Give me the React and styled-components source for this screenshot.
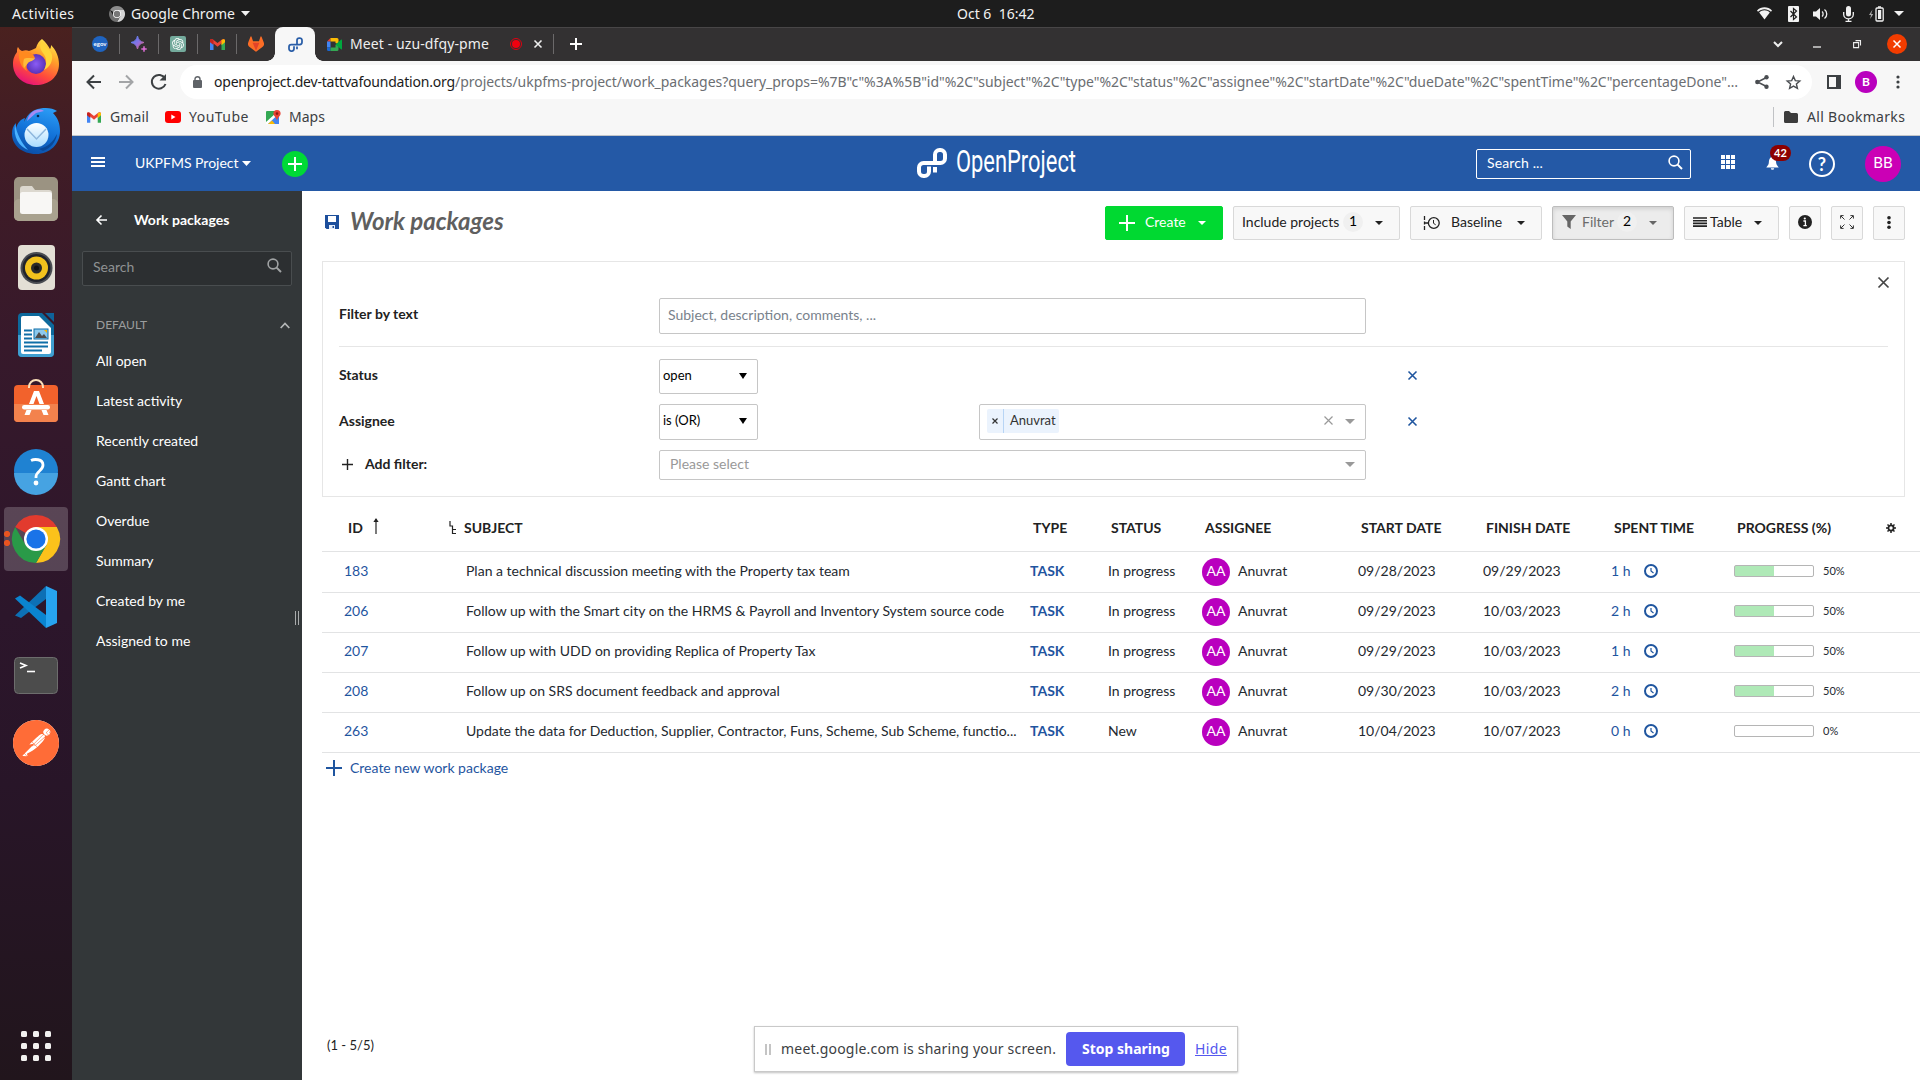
import React from "react";
import styled, { createGlobalStyle, css } from "styled-components";
import { SiPostman, SiOpenai, SiGitlab } from "react-icons/si";

const UI = `"Noto Sans", "Open Sans", sans-serif`;
const LATO = `Lato, "Open Sans", sans-serif`;

const Global = createGlobalStyle`
  * { box-sizing: border-box; }
  body { margin: 0; overflow: hidden; background: #fff; font-family: ${LATO}; font-size: 14px; }
`;

const Label = styled.span`
  display: inline-block;
  flex: none;
  white-space: pre;
  font-family: ${(p) => (p.$ui ? UI : LATO)};
  font-size: ${(p) => p.$size || 14}px;
  font-weight: ${(p) => p.$weight || 400};
  font-style: ${(p) => p.$style || "normal"};
  color: ${(p) => p.$color || "inherit"};
  width: ${(p) => (p.$w ? p.$w + "px" : "auto")};
  letter-spacing: ${(p) => p.$ls || 0}px;
  margin-left: ${(p) => p.$ml || 0}px;
  margin-bottom: ${(p) => (p.$ui ? p.$up || 0 : 2)}px;
  text-decoration: ${(p) => p.$deco || "none"};
`;
const T = ({ w, ls, ...r }) => <Label $w={w} $ls={ls} {...r} />;

const Glyph = styled.svg`
  display: block;
  flex: none;
  margin-left: ${(p) => p.$ml || 0}px;
  margin-top: ${(p) => p.$mt || 0}px;
  overflow: visible;
`;
const Icon = ({ w = 16, h, vb, ml, mt, children, ...r }) => (
  <Glyph width={w} height={h || w} viewBox={vb || `0 0 ${w} ${h || w}`} $ml={ml} $mt={mt} fill="none" {...r}>
    {children}
  </Glyph>
);
const Caret = ({ w = 8, h = 4, color = "#222", ml, mt }) => (
  <Icon w={w} h={h} ml={ml} mt={mt}>
    <path d={`M0 0H${w}L${w / 2} ${h}Z`} fill={color} />
  </Icon>
);
const Cross = ({ s = 9, color, ml, mt, sw = 1.6 }) => (
  <Icon w={s} ml={ml} mt={mt}>
    <path d={`M.5 .5L${s - 0.5} ${s - 0.5}M${s - 0.5} .5L.5 ${s - 0.5}`} stroke={color} strokeWidth={sw} />
  </Icon>
);
const Plus = ({ s = 16, color, ml, mt, sw = 2 }) => (
  <Icon w={s} ml={ml} mt={mt}>
    <path d={`M${s / 2} 0V${s}M0 ${s / 2}H${s}`} stroke={color} strokeWidth={sw} />
  </Icon>
);
const Magnifier = ({ color, ml, mt }) => (
  <Icon w={15} ml={ml} mt={mt}>
    <circle cx="6" cy="6" r="4.9" stroke={color} strokeWidth="1.6" />
    <path d="M9.6 9.6L14 14" stroke={color} strokeWidth="2" />
  </Icon>
);
const OpMark = ({ w, color, ml, mt, sw = 4 }) => (
  <Icon w={w} vb="0 0 30 30" ml={ml} mt={mt}>
    <path
      d="M18 15V6.5a4.5 4.5 0 0 1 4.5-4.5h1a4.5 4.5 0 0 1 4.5 4.5v4a4.5 4.5 0 0 1-4.500 4.500H6.500a4.500 4.500 0 0 0-4.500 4.500v4a4.500 4.500 0 0 0 4.500 4.500h1a4.500 4.500 0 0 0 4.500-4.500v-5"
      stroke={color}
      strokeWidth={sw}
    />
    <path d="M18 19v5.500" stroke={color} strokeWidth={sw} />
  </Icon>
);

/* ---------- desktop shell ---------- */
const Screen = styled.div`
  width: 1920px;
  height: 1080px;
  display: flex;
  flex-direction: column;
  overflow: hidden;
`;
const TopBar = styled.div`
  height: 27px;
  display: flex;
  align-items: center;
  background: #1d1d1d;
  color: #f2f2f2;
`;
const Desktop = styled.div`
  flex: 1;
  display: flex;
  min-height: 0;
`;
const Dock = styled.nav`
  width: 72px;
  padding: 4px 4px 18px;
  display: flex;
  flex-direction: column;
  gap: 4px;
  background: linear-gradient(#4a211f 0, #401c26 12%, #37192b 30%, #2c162b 56%, #281528 72%, #21151c 100%);
`;
const DockSlot = styled.div`
  height: 64px;
  position: relative;
  display: flex;
  align-items: center;
  justify-content: center;
  border-radius: 4px;
  background: ${(p) => (p.$active ? "rgba(255,255,255,.2)" : "none")};
`;
const Running = styled.i`
  position: absolute;
  left: 0;
  top: 24px;
  width: 6px;
  height: 16px;
  background: radial-gradient(circle at 3px 3px, #e95420 2.800px, transparent 3.200px),
    radial-gradient(circle at 3px 12px, #e95420 2.800px, transparent 3.200px);
`;
const AppsSlot = styled(DockSlot)`
  margin-top: auto;
  height: 32px;
`;
const Round = styled.div`
  width: ${(p) => p.$s}px;
  height: ${(p) => p.$s}px;
  flex: none;
  border-radius: 50%;
  display: flex;
  align-items: center;
  justify-content: center;
  margin-left: ${(p) => p.$ml || 0}px;
  margin-top: ${(p) => p.$mt || 0}px;
  padding-bottom: ${(p) => p.$pb || 0}px;
  background: ${(p) => p.$bg};
  color: ${(p) => p.$fg || "#fff"};
  border: ${(p) => p.$bd || "none"};
  font-size: ${(p) => p.$fs || 14}px;
  font-weight: ${(p) => p.$fw || 400};
  line-height: 1;
`;

/* ---------- browser chrome ---------- */
const Browser = styled.div`
  flex: 1;
  min-width: 0;
  display: flex;
  flex-direction: column;
`;
const TabStrip = styled.div`
  height: 34px;
  display: flex;
  align-items: center;
  background: #333132;
  box-shadow: inset 0 1px #484647;
`;
const PinnedTab = styled.div`
  width: ${(p) => (p.$last ? 38 : 39)}px;
  height: 20px;
  display: flex;
  align-items: center;
  justify-content: center;
  border-right: 1px solid ${(p) => (p.$last ? "transparent" : "#6b696a")};
`;
const ActiveTab = styled.div`
  width: 40px;
  height: 34px;
  display: flex;
  align-items: center;
  justify-content: center;
  background: #f7f7f7;
  border-radius: 8px 8px 0 0;
  position: relative;
  &::before,
  &::after {
    content: "";
    position: absolute;
    bottom: 0;
    width: 8px;
    height: 8px;
  }
  &::before {
    left: -8px;
    background: radial-gradient(circle at 0 0, transparent 7.500px, #f7f7f7 8px);
  }
  &::after {
    right: -8px;
    background: radial-gradient(circle at 100% 0, transparent 7.500px, #f7f7f7 8px);
  }
`;
const Rule = styled.i`
  width: 1px;
  height: 20px;
  flex: none;
  background: ${(p) => p.$c};
  margin-left: ${(p) => p.$ml}px;
`;
const Toolbar = styled.div`
  height: 42px;
  display: flex;
  align-items: center;
  background: #f7f7f7;
`;
const Omnibox = styled.div`
  margin-left: 13px;
  width: 1632px;
  height: 34px;
  border-radius: 17px;
  background: #fff;
  display: flex;
  align-items: center;
`;
const Bookmarks = styled.div`
  height: 33px;
  padding-bottom: 4px;
  display: flex;
  align-items: center;
  background: #f7f7f7;
  border-bottom: 1px solid #c2c5c9;
  color: #3c4043;
`;
const Spacer = styled.i`
  flex: 1;
`;

/* ---------- application ---------- */
const AppHeader = styled.header`
  height: 55px;
  display: flex;
  align-items: center;
  background: #2459a6;
  color: #fff;
`;
const HeaderSearch = styled.div`
  width: 215px;
  height: 30px;
  margin-left: 399px;
  border: 1px solid #fff;
  border-radius: 2px;
  display: flex;
  align-items: center;
`;
const Bell = styled.div`
  width: 25px;
  height: 24px;
  margin-left: 31px;
  position: relative;
`;
const BellCount = styled.span`
  position: absolute;
  left: 4px;
  top: -7px;
  width: 21px;
  height: 16px;
  border-radius: 8px;
  background: #8d0000;
  color: #fff;
  font: 700 11px/16px ${LATO};
  text-align: center;
`;
const Body = styled.div`
  flex: 1;
  display: flex;
  min-height: 0;
`;
const Side = styled.aside`
  width: 230px;
  background: #333739;
  color: #fff;
  display: flex;
  flex-direction: column;
  position: relative;
`;
const SideTitle = styled.div`
  height: 60px;
  padding: 0 0 2px 24px;
  display: flex;
  align-items: center;
`;
const SideSearch = styled.div`
  margin: 0 10px;
  height: 35px;
  border: 1px solid #494d4f;
  border-radius: 2px;
  background: #2c2f31;
  display: flex;
  align-items: center;
  padding: 0 9px 3px 10px;
  justify-content: space-between;
  color: #8f9293;
`;
const SideGroup = styled.div`
  height: 40px;
  margin-top: 19px;
  padding: 0 12px 0 24px;
  display: flex;
  align-items: center;
  justify-content: space-between;
  color: #9b9d9e;
`;
const SideItem = styled.div`
  height: 40px;
  padding: 0 0 8px 24px;
  display: flex;
  align-items: center;
`;
const SideList = styled.div`
  padding-top: 0;
`;
const Resizer = styled.i`
  position: absolute;
  right: 3px;
  top: 420px;
  width: 4px;
  height: 14px;
  border: solid #a9abac;
  border-width: 0 1px;
`;
const Main = styled.main`
  flex: 1;
  min-width: 0;
  padding-left: 20px;
  display: flex;
  flex-direction: column;
  color: #222;
`;
const TitleRow = styled.div`
  height: 70px;
  padding: 15px 15px 0 3px;
  display: flex;
  align-items: flex-start;
`;
const TitleBox = styled.div`
  flex: 1;
  height: 31px;
  display: flex;
  align-items: center;
`;
const Button = styled.div`
  width: ${(p) => p.$w}px;
  height: 34px;
  margin-left: 10px;
  border-radius: 2px;
  display: flex;
  align-items: center;
  padding-bottom: 1px;
  justify-content: ${(p) => (p.$center ? "center" : "flex-start")};
  border: 1px solid #d9d9d9;
  background: #f8f8f8;
  ${(p) => p.$primary && css`background: #00d931; border-color: #00d931; color: #fff;`}
  ${(p) => p.$pressed && css`background: #ececec; border-color: #bdbdbd; color: #6b6b6b; box-shadow: inset 0 2px 4px rgba(0,0,0,.12);`}
`;
const Panel = styled.section`
  width: 1583px;
  height: 236px;
  border: 1px solid #e6e6e6;
  padding: 0 16px;
`;
const PanelHead = styled.div`
  height: 36px;
  padding-right: 0;
  margin-right: -1px;
  display: flex;
  justify-content: flex-end;
`;
const FilterRow = styled.div`
  display: grid;
  grid-template-columns: 320px 320px 387px 60px;
  align-items: center;
  height: ${(p) => p.$h}px;
  margin-top: ${(p) => p.$mt || 0}px;
`;
const FilterLabel = styled.div`
  display: flex;
  align-items: center;
  padding-bottom: ${(p) => p.$up || 0}px;
`;
const Field = styled.div`
  height: 100%;
  border: 1px solid #c6c6c6;
  border-radius: 2px;
  display: flex;
  align-items: center;
  padding: 0 10px 2px ${(p) => p.$pl || 8}px;
  width: ${(p) => (p.$w ? p.$w + "px" : "auto")};
  grid-column: ${(p) => p.$col || "auto"};
`;
const Chip = styled.span`
  height: 24px;
  width: 72px;
  border-radius: 2px;
  background: #ebf3fd;
  display: flex;
  align-items: stretch;
  color: #333;
`;
const ChipCross = styled.span`
  width: 17px;
  border-right: 1px solid #b8d5f5;
  display: flex;
  align-items: center;
  justify-content: center;
`;
const ChipText = styled.span`
  padding-left: 6px;
  display: flex;
  align-items: center;
`;
const PanelRule = styled.div`
  height: 1px;
  margin-top: 12px;
  background: #e6e6e6;
`;
const Row = styled.div`
  display: grid;
  grid-template-columns: 122px 576px 78px 94px 156px 125px 128px 123px 146px 1fr;
  height: ${(p) => p.$h || 40}px;
  border-bottom: 1px solid #e2e3e4;
`;
const Th = styled.div`
  display: flex;
  align-items: center;
  padding: 8px 0 0 ${(p) => p.$pl || 13}px;
`;
const Td = styled.div`
  display: flex;
  align-items: center;
  padding: 0 0 ${(p) => (p.$first ? 2 : 3)}px ${(p) => p.$pl || 10}px;
  min-width: 0;
  color: ${(p) => (p.$link ? "#1f559f" : "#24292f")};
`;
const Bar = styled.div`
  width: 80px;
  height: 12px;
  border: 1px solid #b5b5b5;
  border-radius: 2px;
  background: linear-gradient(#afe9b7, #afe9b7) no-repeat;
  background-size: ${(p) => p.$v}% 100%;
`;
const AddRow = styled.div`
  height: 30px;
  padding-left: 4px;
  display: flex;
  align-items: center;
  color: #1f559f;
`;
const Pager = styled.div`
  margin-top: auto;
  height: 68px;
  padding-left: 5px;
  display: flex;
  align-items: center;
`;
const ShareBar = styled.div`
  position: absolute;
  left: 754px;
  top: 1026px;
  width: 484px;
  height: 46px;
  border: 1px solid #c9c9c9;
  box-shadow: 0 1px 2px rgba(0, 0, 0, 0.25);
  background: #fff;
  display: flex;
  align-items: center;
  color: #3c4043;
`;
const Grip = styled.i`
  width: 6px;
  height: 11px;
  margin-left: 10px;
  border: solid #c4c4c4;
  border-width: 0 2px;
`;
const StopButton = styled.div`
  width: 119px;
  height: 34px;
  margin-left: 11px;
  border-radius: 4px;
  background: #5558ee;
  color: #fff;
  display: flex;
  align-items: center;
  justify-content: center;
`;

/* ---------- dock icons ---------- */
const Firefox = () => (
  <Icon w={46} h={46} vb="0 0 46 46" mt={-2}>
    <defs>
      <linearGradient id="ff" x1=".8" y1="0" x2=".3" y2="1">
        <stop offset="0" stopColor="#fff04f" /><stop offset=".35" stopColor="#ffa02a" /><stop offset=".7" stopColor="#ff4a3c" /><stop offset="1" stopColor="#e5107c" />
      </linearGradient>
      <radialGradient id="ffg"><stop offset="0" stopColor="#8a5cf5" /><stop offset="1" stopColor="#5a32b8" /></radialGradient>
    </defs>
    <path d="M29 0c4 3 6 7 8 10 1-1 1-3 1-4 5 5 8 12 8 19 0 13-10 21-23 21S0 37 0 25c0-6 2-9 4-12 0-2 0-4 1-5 1 2 2 3 4 4 3-1 5-1 7 0 3-1 5-2 7-3 1-4 3-7 6-9z" fill="url(#ff)" />
    <circle cx="23" cy="25" r="10" fill="url(#ffg)" />
    <path d="M6 13c3-1 6-1 9 0 3 0 6 3 7 6-3 1-5 2-7 4-2 3-2 7-1 9-6-3-9-12-8-19z" fill="#ff8a1f" />
    <path d="M11 20c3-2 7 0 11-1-1 3-5 3-7 5l-4 5c-1-3-1-6 0-9z" fill="#ffbc3a" />
    <path d="M29 2c-3 4-2 8 1 12 4 5 4 12 1 17 6-3 9-9 8-15-1-5-7-8-10-14z" fill="#ffd53a" />
  </Icon>
);
const Thunderbird = () => (
  <Icon w={48} h={46} vb="0 0 48 46">
    <defs>
      <linearGradient id="tb" x1=".7" y1="0" x2=".4" y2="1"><stop offset="0" stopColor="#2a9bf5" /><stop offset=".5" stopColor="#1373d9" /><stop offset="1" stopColor="#0b4fa8" /></linearGradient>
      <linearGradient id="tbe" x1="0" y1="0" x2="0" y2="1"><stop offset="0" stopColor="#fff" /><stop offset="1" stopColor="#a9dcff" /></linearGradient>
    </defs>
    <path d="M23 2C31-1 40-.5 45 3l-4 2c5 5 7 11 7 18 0 13-10 23-24 23S0 37 0 26c0-5 1-8 4-11l0 5c2-6 5-9 9-10l-1 4c3-6 6-10 11-12z" fill="url(#tb)" />
    <path d="M3 16c-2 14 4 22 13 26C9 34 5 26 3 16z" fill="#4bb2ff" />
    <path d="M24 2c-5 2-8 6-9 11l9-8 8-2c-3-2-5-1.500-8-1z" fill="#a58bf5" />
    <circle cx="24.500" cy="27" r="12" fill="url(#tbe)" />
    <path d="M15 21l9.500 10 9.500-10" stroke="#8db6dd" strokeWidth="1.500" />
    <circle cx="26" cy="8" r="1.300" fill="#06264f" />
    <path d="M31 43c8-3 13-9 14-17-4 8-9 13-18 15z" fill="#0a4796" />
  </Icon>
);
const Files = () => (
  <Icon w={44} h={44}>
    <rect width="44" height="44" rx="5" fill="#9b9382" />
    <rect y="22" width="44" height="22" rx="5" fill="#a9a28f" />
    <path d="M6 12a3 3 0 0 1 3-3h9l3 4h14a3 3 0 0 1 3 3v4H6z" fill="#dcd8cf" />
    <rect x="6" y="15" width="32" height="22" rx="2.500" fill="#f8f7f5" />
  </Icon>
);
const Rhythmbox = () => (
  <Icon w={37} h={45}>
    <rect width="37" height="45" rx="4" fill="#e3dfd5" />
    <circle cx="18.500" cy="23" r="16" fill="#4a4d52" />
    <circle cx="18.500" cy="23" r="14" fill="#20232c" />
    <circle cx="18.500" cy="23" r="11.500" fill="#f2c21d" />
    <circle cx="18.500" cy="23" r="5.500" fill="#2a2a2a" />
    <circle cx="18.500" cy="23" r="2.500" fill="#111" />
  </Icon>
);
const Writer = () => (
  <Icon w={36} h={44}>
    <path d="M4 0H24L36 12V40a4 4 0 0 1-4 4H4a4 4 0 0 1-4-4V4a4 4 0 0 1 4-4z" fill="#0d699c" />
    <path d="M0 22H36V40a4 4 0 0 1-4 4H4a4 4 0 0 1-4-4z" fill="#3f9fd0" />
    <path d="M27 0h9v9z" fill="#0e629a" />
    <path d="M5 3H21L33 15V39a2 2 0 0 1-2 2H5a2 2 0 0 1-2-2V5a2 2 0 0 1 2-2z" fill="#fff" />
    <path d="M6 17.500h8M6 21.500h8M6 25.500h8M6 29.500h24M6 33.500h24M6 37.500h18" stroke="#0f6fa8" strokeWidth="2" />
    <rect x="16" y="16" width="14" height="10" fill="#8cc9ee" stroke="#0f6fa8" />
    <path d="M17 25l4-6 3 4 2-2 3 4z" fill="#4d4d4d" /><path d="M26 17h3v3z" fill="#f5b400" />
  </Icon>
);
const Software = () => (
  <Icon w={44} h={43} mt={-6}>
    <rect y="6" width="44" height="37" rx="4" fill="#f2622c" />
    <path d="M0 25H44V39a4 4 0 0 1-4 4H4a4 4 0 0 1-4-4z" fill="#f3824d" />
    <path d="M15 9v-1a7 7 0 0 1 14 0v1" stroke="#fbe0b9" strokeWidth="2" />
    <path d="M20 12h5l5 13h-4.500l-3-8-3 8H15zM12.500 31h5l-2 5H10.500zM27.500 31h5l2 5h-5z" fill="#fff" />
    <rect x="8" y="26" width="28" height="4.500" rx="2.200" fill="#fff" />
  </Icon>
);
const HelpApp = () => (
  <Icon w={44}>
    <circle cx="22" cy="22" r="22" fill="#1f82d2" />
    <path d="M0 24a22 22 0 0 0 44 0z" fill="#46a3e2" />
    <path d="M17 11.500c3-1.500 12-2 12 4.500 0 6-7 6-7 12v1" stroke="#fff" strokeWidth="2.800" />
    <circle cx="22" cy="34" r="2.400" fill="#fff" />
  </Icon>
);
const ChromeIcon = ({ w = 48, ml, gray }) => (
  <Icon w={w} vb="0 0 48 48" ml={ml}>
    <path d="M24 24L3.200 12A24 24 0 0 1 44.800 12H24z" fill={gray ? "#8d8d8d" : "#e23b2e"} />
    <path d="M24 12H44.800A24 24 0 0 1 24 48l10.400-18z" fill={gray ? "#d5d5d5" : "#fcc21b"} />
    <path d="M3.200 12A24 24 0 0 0 24 48L34.400 30H13.600z" fill={gray ? "#6f6f6f" : "#2a9a48"} />
    <circle cx="24" cy="24" r="12" fill="#fff" />
    <circle cx="24" cy="24" r="9.600" fill={gray ? "#777" : "#1a73e8"} />
  </Icon>
);
const VsCode = () => (
  <Icon w={42}>
    <path d="M0 29.500L31 0V13L6 32z" fill="#0d70b5" />
    <path d="M0 12.500L5 9.500 31 29V42z" fill="#0a84d0" />
    <path d="M31 0L42 5V37L31 42z" fill="#27a4f0" />
  </Icon>
);
const Terminal = () => (
  <Icon w={44} h={37}>
    <rect x=".5" y=".5" width="43" height="36" rx="4" fill="#4c4c4c" stroke="#6d6d6d" />
    <path d="M6 6l6 2.500-6 2.500" stroke="#fff" strokeWidth="1.600" />
    <path d="M13 14.500h8" stroke="#fff" strokeWidth="1.600" />
  </Icon>
);
const AppGrid = () => (
  <Icon w={30}>
    {[0, 12, 24].map((y) => [0, 12, 24].map((x) => <rect key={x + "-" + y} x={x} y={y} width="6" height="6" rx="1.500" fill="#f2f1f0" />))}
  </Icon>
);
const PostmanBadge = styled(Round)`
  svg { display: block; }
`;
const GmailIcon = ({ w = 15, h = 11, ml }) => (
  <Icon w={w} h={h} vb="0 0 15 11" ml={ml}>
    <path d="M0 1.500V11H3.500V4z" fill="#4285f4" />
    <path d="M15 1.500V11H11.500V4z" fill="#34a853" />
    <path d="M0 1.500C0 0 2-.5 3 .5L7.500 4 12 .5c1-1 3-.5 3 1L7.500 7.800z" fill="#ea4335" />
    <path d="M11.500 1l2-.8c1 0 1.500.6 1.500 1.300v1.700l-3.500 3z" fill="#fbbc04" />
    <path d="M0 1.500C0 .6.800.1 1.500.1L3.500 1v5L0 3.200z" fill="#c5221f" />
  </Icon>
);
const MeetIcon = ({ ml }) => (
  <Icon w={15} h={13} ml={ml}>
    <path d="M3.500 0v3.500H0z" fill="#ea4335" /><path d="M0 3.500h3.500v6H0z" fill="#4285f4" /><path d="M0 9.500h3.500V13H1.500A1.500 1.500 0 0 1 0 11.500z" fill="#1967d2" />
    <path d="M3.500 0H10a1.500 1.500 0 0 1 1.500 1.500V6L8.500 5V3.500h-5z" fill="#fbbc04" />
    <path d="M3.500 9.500h5V7l3-1v5.500A1.500 1.500 0 0 1 10 13H3.500z" fill="#34a853" /><path d="M8.500 6.500L14 1.800c.5-.4 1-.2 1 .4v8.600c0 .6-.5.8-1 .4z" fill="#00a83e" />
  </Icon>
);

const SIDE = ["All open", "Latest activity", "Recently created", "Gantt chart", "Overdue", "Summary", "Created by me", "Assigned to me"];
const ROWS = [
  ["183", "Plan a technical discussion meeting with the Property tax team", "In progress", "09/28/2023", "09/29/2023", "1 h", 50],
  ["206", "Follow up with the Smart city on the HRMS & Payroll and Inventory System source code", "In progress", "09/29/2023", "10/03/2023", "2 h", 50],
  ["207", "Follow up with UDD on providing Replica of Property Tax", "In progress", "09/29/2023", "10/03/2023", "1 h", 50],
  ["208", "Follow up on SRS document feedback and approval", "In progress", "09/30/2023", "10/03/2023", "2 h", 50],
  ["263", "Update the data for Deduction, Supplier, Contractor, Funs, Scheme, Sub Scheme, functio...", "New", "10/04/2023", "10/07/2023", "0 h", 0],
];

export default function App() {
  return (
    <Screen>
      <Global />
      <TopBar>
        <T $ui w={62} $ml={12} ls={0.4}>Activities</T>
        <ChromeIcon w={16} ml={35} gray />
        <T $ui w={104} $ml={6} ls={0.05}>Google Chrome</T>
        <Caret w={9} h={5} color="#f2f2f2" ml={6} />
        <T $ui w={78} $ml={707}>Oct 6  16:42</T>
        <Icon w={15} h={13} ml={722}>
          <path d="M0 3.500C4-.8 11-.8 15 3.500l-1 1.300C10.500 1.300 4.500 1.300 1 4.800z" fill="#f2f2f2" />
          <path d="M2.200 5.600c3-3 7.600-3 10.600 0L7.500 12.500z" fill="#f2f2f2" />
        </Icon>
        <Icon w={11} h={16} ml={16}>
          <rect width="11" height="16" rx="1" fill="#f2f2f2" />
          <path d="M2.500 5l6 6-3 2.500v-11l3 2.500-6 6" stroke="#1d1d1d" strokeWidth="1.200" />
        </Icon>
        <Icon w={15} h={12} ml={14}>
          <path d="M0 3.500h3L7 0v12L3 8.500H0z" fill="#f2f2f2" />
          <path d="M9 3.500c1.500 1.200 1.500 3.800 0 5M11.500 1.500c3 2 3 7 0 9" stroke="#f2f2f2" strokeWidth="1.300" />
        </Icon>
        <Icon w={11} h={16} ml={15}>
          <rect x="3" width="5" height="10.500" rx="2.500" fill="#f2f2f2" />
          <path d="M.7 6v2.500a4.800 4.300 0 0 0 9.600 0V6M5.500 12.500V15M2.500 15.300h6" stroke="#f2f2f2" strokeWidth="1.300" />
        </Icon>
        <Icon w={15} h={16} ml={15}>
          <path d="M3.500 3.500L0 9h2l-.8 4L4.200 8h-2z" fill="#aaa" />
          <rect x="7" y="2" width="7.200" height="13" rx="1" stroke="#f2f2f2" strokeWidth="1.300" />
          <path d="M9 4h3.200v9H9zM9 .2h3v1.500H9z" fill="#f2f2f2" />
        </Icon>
        <Caret w={10} h={5} color="#f2f2f2" ml={10} />
      </TopBar>
      <Desktop>
        <Dock>
          <DockSlot><Firefox /></DockSlot>
          <DockSlot><Thunderbird /></DockSlot>
          <DockSlot><Files /></DockSlot>
          <DockSlot><Rhythmbox /></DockSlot>
          <DockSlot><Writer /></DockSlot>
          <DockSlot><Software /></DockSlot>
          <DockSlot><HelpApp /></DockSlot>
          <DockSlot $active><Running /><ChromeIcon /></DockSlot>
          <DockSlot><VsCode /></DockSlot>
          <DockSlot><Terminal /></DockSlot>
          <DockSlot>
            <PostmanBadge $s={46} $bg="#fff"><SiPostman size={46} color="#ff6c37" /></PostmanBadge>
          </DockSlot>
          <AppsSlot><AppGrid /></AppsSlot>
        </Dock>
        <Browser>
          <TabStrip>
            <Rule $c="transparent" $ml={8} />
            <PinnedTab>
              <Round $s={16} $bg="#1f64c0" $fs={6} $fw={700}>egov</Round>
            </PinnedTab>
            <PinnedTab>
              <Icon w={16}>
                <defs><linearGradient id="sp" x1="0" y1="0" x2="1" y2="1"><stop offset="0" stopColor="#3f86f5" /><stop offset=".55" stopColor="#8f6fe0" /><stop offset="1" stopColor="#f0605a" /></linearGradient></defs>
                <path d="M6.500 0C7.500 4 9 5.500 13 6.500 9 7.500 7.500 9 6.500 13 5.500 9 4 7.500 0 6.500 4 5.500 5.500 4 6.500 0z" fill="url(#sp)" stroke="url(#sp)" />
                <path d="M13 10c.4 2 1 2.600 3 3-2 .4-2.600 1-3 3-.4-2-1-2.600-3-3 2-.4 2.600-1 3-3z" fill="#d76bd0" stroke="#d76bd0" strokeWidth=".6" />
              </Icon>
            </PinnedTab>
            <PinnedTab>
              <Icon w={16}>
                <rect width="16" height="16" rx="2" fill="#74aa9c" />
                <SiOpenai x="2" y="2" size={12} color="#fff" />
              </Icon>
            </PinnedTab>
            <PinnedTab><GmailIcon /></PinnedTab>
            <PinnedTab $last>
              <Icon w={16} vb="0 0 24 24"><SiGitlab size={24} color="#fc6d26" /><path d="M12 22L7 10h10z" fill="#e24329" /></Icon>
            </PinnedTab>
            <ActiveTab><OpMark w={15} color="#2a5ea8" sw={3.5} /></ActiveTab>
            <MeetIcon ml={12} />
            <T $ui w={139} $ml={8} ls={0.1} $color="#eee" $up={1}>Meet - uzu-dfqy-pme</T>
            <Icon w={12} ml={21}>
              <circle cx="6" cy="6" r="5.500" stroke="#e0000f" /><circle cx="6" cy="6" r="4" fill="#f2000f" />
            </Icon>
            <Cross s={8} color="#eee" ml={12} />
            <Rule $c="#6b696a" $ml={11} />
            <Plus s={12} color="#fff" ml={16} />
            <Spacer />
            <Icon w={10} h={7}><path d="M1 1l4 4 4-4" stroke="#eee" strokeWidth="2" /></Icon>
            <Icon w={8} h={2} ml={30} mt={5}><path d="M0 1h8" stroke="#eee" strokeWidth="1.300" /></Icon>
            <Icon w={8} h={8} ml={32}><path d="M.6 2.600h5v5h-5zM2.500.6h5v5" stroke="#eee" strokeWidth="1.100" /></Icon>
            <Round $s={20} $bg="#f23c00" $ml={26}><Cross s={8} color="#fff" sw={1.500} /></Round>
            <Rule $c="transparent" $ml={12} />
          </TabStrip>
          <Toolbar>
            <Icon w={16} ml={14}><path d="M15 8H2M8 1.500L1.500 8 8 14.500" stroke="#3c4043" strokeWidth="2" /></Icon>
            <Icon w={16} ml={16}><path d="M1 8H14M8 1.500L14.500 8 8 14.500" stroke="#a3a5a7" strokeWidth="2" /></Icon>
            <Icon w={16} ml={17}><path d="M14 4.500A7 6.800 0 1 0 14.500 10" stroke="#3c4043" strokeWidth="2" /><path d="M15 0v6.500H8.500z" fill="#3c4043" /></Icon>
            <Omnibox>
              <Icon w={9} h={12} ml={13}><rect y="4" width="9" height="8" rx="1" fill="#5f6368" /><path d="M2 4.500V3a2.500 2.300 0 0 1 5 0v1.500" stroke="#5f6368" strokeWidth="1.400" /></Icon>
              <T $ui w={241} $ml={12} ls={-0.21} $up={2} $color="#1b1b1b">openproject.dev-tattvafoundation.org</T>
              <T $ui w={1282} ls={-0.037} $up={2} $color="#6b6e72">/projects/ukpfms-project/work_packages?query_props=%7B"c"%3A%5B"id"%2C"subject"%2C"type"%2C"status"%2C"assignee"%2C"startDate"%2C"dueDate"%2C"spentTime"%2C"percentageDone"…</T>
              <Icon w={14} ml={18}><path d="M11.500 2.500L2.500 7l9 4.500" stroke="#4a4d51" strokeWidth="1.500" /><circle cx="11.500" cy="2.300" r="2.200" fill="#4a4d51" /><circle cx="2.300" cy="7" r="2.200" fill="#4a4d51" /><circle cx="11.500" cy="11.700" r="2.200" fill="#4a4d51" /></Icon>
              <Icon w={15} ml={17}><path d="M7.500 1.500l1.800 4.100 4.500.4-3.400 3 1 4.400-3.900-2.300-3.900 2.300 1-4.400-3.400-3 4.500-.4z" stroke="#4a4d51" strokeWidth="1.400" /></Icon>
            </Omnibox>
            <Icon w={14} h={14} ml={15}><path d="M1 1h12v12H1z" stroke="#3c4043" strokeWidth="2" /><path d="M9 1h4v12H9z" fill="#3c4043" /></Icon>
            <Round $s={22} $bg="#b900be" $ml={14} $fs={12} $fw={700}>B</Round>
            <Icon w={4} h={14} ml={19}><circle cx="2" cy="2" r="1.600" fill="#3c4043" /><circle cx="2" cy="7" r="1.600" fill="#3c4043" /><circle cx="2" cy="12" r="1.600" fill="#3c4043" /></Icon>
          </Toolbar>
          <Bookmarks>
            <GmailIcon ml={15} w={14} />
            <T $ui w={39} $ml={9} ls={0.13} $up={2}>Gmail</T>
            <Icon w={16} h={12} ml={16}><rect width="16" height="12" rx="3" fill="#f00" /><path d="M6.300 3.500L10.500 6l-4.200 2.500z" fill="#fff" /></Icon>
            <T $ui w={60} $ml={8} ls={0.48} $up={2}>YouTube</T>
            <Icon w={15} ml={17}>
              <rect y="1" width="13" height="13" rx="1" fill="#34a853" /><path d="M0 14L13 3v11z" fill="#4285f4" /><path d="M0 12l10-9 2 1.500L2 14H0z" fill="#fff" /><path d="M2 14l4-3.500L9 14z" fill="#fbbc04" />
              <path d="M11 0a3.600 3.600 0 0 1 3.600 3.600c0 2.500-3 3.900-3.600 7-.6-3.100-3.600-4.500-3.600-7A3.600 3.600 0 0 1 11 0z" fill="#ea4335" /><circle cx="11" cy="3.600" r="1.300" fill="#8c1b12" />
            </Icon>
            <T $ui w={36} $ml={8} $up={2}>Maps</T>
            <Spacer />
            <Rule $c="#c0c2c5" $ml={0} />
            <Icon w={14} h={12} ml={10}><path d="M0 1.500A1.500 1.500 0 0 1 1.500 0H5l2 2h5.500A1.500 1.500 0 0 1 14 3.500v7a1.500 1.500 0 0 1-1.500 1.500h-11A1.500 1.500 0 0 1 0 10.500z" fill="#3c3c3c" /></Icon>
            <T $ui w={98} $ml={9} ls={0.3} $up={2}>All Bookmarks</T>
            <Rule $c="transparent" $ml={14} />
          </Bookmarks>
          <AppHeader>
            <Icon w={14} h={10} ml={19} mt={-3}><path d="M0 1h14M0 5h14M0 9h14" stroke="#fff" strokeWidth="2" /></Icon>
            <T w={104} $ml={30}>UKPFMS Project</T>
            <Caret w={9} h={5} color="#fff" ml={3} mt={-1} />
            <Round $s={26} $bg="#00d936" $ml={31} $mt={1}><Plus s={14} color="#fff" /></Round>
            <Icon w={160} h={30} ml={609} mt={-2}>
              <OpMark w={30} color="#fff" />
              <text x="39" y="24" fontFamily="Roboto, sans-serif" fontWeight="400" fontSize="32" fill="#fff" textLength="120" lengthAdjust="spacingAndGlyphs">OpenProject</text>
            </Icon>
            <HeaderSearch>
              <T w={56} $ml={10} ls={0.12}>Search ...</T>
              <Magnifier color="#fff" ml={125} mt={-3} />
            </HeaderSearch>
            <Icon w={14} ml={30} mt={-3}>
              {[0, 5, 10].map((y) => [0, 5, 10].map((x) => <rect key={x + "," + y} x={x} y={y} width="4" height="4" fill="#fff" />))}
            </Icon>
            <Bell>
              <Icon w={13} h={13} mt={5}><path d="M6.500 0C3.500 0 3 3 2.800 6 2.600 8 1.500 8.500.3 10.500h12.400C11.500 8.500 10.400 8 10.200 6 10 3 9.500 0 6.500 0zM4.800 11.200h3.400a1.700 1.600 0 0 1-3.400 0z" fill="#fff" /></Icon>
              <BellCount>42</BellCount>
            </Bell>
            <Round $s={26} $bg="none" $bd="2px solid #fff" $ml={18} $mt={1} $fs={18} $fw={700}>?</Round>
            <Round $s={36} $bg="#cb00b5" $ml={30} $fs={15} $pb={2}>BB</Round>
          </AppHeader>
          <Body>
            <Side>
              <SideTitle>
                <Icon w={11} h={10}><path d="M11 5H1M5.500 .5L1 5l4.500 4.500" stroke="#fff" strokeWidth="1.600" /></Icon>
                <T w={95} $weight={700} $ml={27}>Work packages</T>
              </SideTitle>
              <SideSearch><T w={41}>Search</T><Magnifier color="#a0a3a4" mt={-3} /></SideSearch>
              <SideGroup>
                <T w={51} $size={12}>DEFAULT</T>
                <Icon w={10} h={7}><path d="M.7 6L5 1.500 9.300 6" stroke="#b5b7b8" strokeWidth="1.700" /></Icon>
              </SideGroup>
              <SideList>
                {SIDE.map((t) => <SideItem key={t}><T>{t}</T></SideItem>)}
              </SideList>
              <Resizer />
            </Side>
            <Main>
              <TitleRow>
                <TitleBox>
                  <Icon w={14}>
                    <path d="M0 0h14v14H1.500L0 12.500z" fill="#1d4f9c" /><path d="M3 1h8v6H3z" fill="#fff" /><path d="M4 10h6v4H4z" fill="#e6eefa" /><path d="M7.500 11h1.500v2H7.500z" fill="#1d4f9c" />
                  </Icon>
                  <T w={152} $ml={11} $size={24} $weight={700} $style="italic" $color="#5f5f5f">Work packages</T>
                </TitleBox>
                <Button $w={118} $primary>
                  <Plus s={16} color="#fff" ml={13} mt={1} />
                  <T w={41} $ml={10}>Create</T><Caret color="#fff" ml={12} />
                </Button>
                <Button $w={167}>
                  <T w={97} $ml={8}>Include projects</T>
                  <Round $s={20} $bg="#f0f0f0" $fg="#000" $ml={4} $mt={-1} $pb={2}>1</Round>
                  <Caret ml={12} />
                </Button>
                <Button $w={132}>
                  <Icon w={17} h={14} ml={12}>
                    <path d="M1.500 0v4M1.500 5.500v3M1.500 10v4M1.500 7H5" stroke="#222" strokeWidth="1.300" /><circle cx="10.800" cy="7" r="5.400" stroke="#222" strokeWidth="1.300" /><path d="M10.500 4v3.300l2.200 1.500" stroke="#222" />
                  </Icon>
                  <T w={50} $ml={11}>Baseline</T><Caret ml={16} />
                </Button>
                <Button $w={122} $pressed>
                  <Icon w={14} h={14} ml={9} mt={-2}><path d="M0 0h14L8.700 6.500V14L5.300 11.500v-5z" fill="#666" /></Icon>
                  <T w={31} $ml={6}>Filter</T>
                  <Round $s={20} $bg="#f0f0f0" $fg="#000" $ml={4} $mt={-1} $pb={2}>2</Round>
                  <Caret color="#666" ml={12} />
                </Button>
                <Button $w={95}>
                  <Icon w={14} h={10} ml={8} mt={-1}><path d="M0 1h14M0 3.700h14M0 6.400h14M0 9.100h14" stroke="#222" strokeWidth="1.600" /></Icon>
                  <T w={32} $ml={3}>Table</T><Caret ml={12} />
                </Button>
                <Button $w={32} $center>
                  <Icon w={14} mt={-1}><circle cx="7" cy="7" r="7" fill="#222" /><path d="M5.400 6h2v4.500M5.400 10.700h3.400" stroke="#fff" strokeWidth="1.300" /><circle cx="6.800" cy="3.500" r="1.100" fill="#fff" /></Icon>
                </Button>
                <Button $w={32} $center>
                  <Icon w={14} mt={-1}><path d="M4.500 4.500L1 1M.6 3.600V.6H3.600M9.500 4.500L13 1M10.400 .6h3V3.600M4.500 9.500L1 13M.6 10.400v3H3.600M9.500 9.500L13 13M10.400 13.400h3V10.400" stroke="#333" strokeWidth="1" /></Icon>
                </Button>
                <Button $w={32} $center>
                  <Icon w={4} h={13} mt={-1}><circle cx="2" cy="1.800" r="1.800" fill="#222" /><circle cx="2" cy="6.500" r="1.800" fill="#222" /><circle cx="2" cy="11.200" r="1.800" fill="#222" /></Icon>
                </Button>
              </TitleRow>
              <Panel>
                <PanelHead><Cross s={11} color="#444" mt={15} sw={1.700} /></PanelHead>
                <FilterRow $h={36}>
                  <FilterLabel $up={4}><T w={79} $weight={700}>Filter by text</T></FilterLabel>
                  <Field $col="2 / 4"><T w={208} $color="#79828c">Subject, description, comments, ...</T></Field>
                </FilterRow>
                <PanelRule />
                <FilterRow $h={35} $mt={12}>
                  <FilterLabel $up={2}><T w={39} $weight={700}>Status</T></FilterLabel>
                  <Field $w={99} $pl={3} $col="2 / 4"><T w={28} $size={13} $color="#000">open</T><Spacer /><Caret h={6} color="#000" /></Field>
                  <Cross s={9} color="#1f559f" ml={42} mt={-2} />
                </FilterRow>
                <FilterRow $h={36} $mt={10}>
                  <FilterLabel $up={2}><T w={56} $weight={700}>Assignee</T></FilterLabel>
                  <Field $w={99} $pl={3}><T w={37} $size={13} $color="#000">is (OR)</T><Spacer /><Caret h={6} color="#000" /></Field>
                  <Field $pl={7}>
                    <Chip><ChipCross><Cross s={6} color="#333" sw={1.200} /></ChipCross><ChipText><T w={45} $size={13}>Anuvrat</T></ChipText></Chip>
                    <Spacer /><Cross s={9} color="#999" sw={1.200} mt={-2} /><Caret w={10} h={5} color="#999" ml={12} />
                  </Field>
                  <Cross s={9} color="#1f559f" ml={42} mt={-1} />
                </FilterRow>
                <FilterRow $h={30} $mt={10}>
                  <FilterLabel $up={2}>
                    <Plus s={11} color="#222" ml={3} sw={1.400} />
                    <T w={63} $weight={700} $ml={12}>Add filter:</T>
                  </FilterLabel>
                  <Field $col="2 / 4" $pl={10}><T w={79} $color="#999">Please select</T><Spacer /><Caret w={10} h={5} color="#999" /></Field>
                </FilterRow>
              </Panel>
              <Row $h={55}>
                <Th $pl={26}><T w={15} $weight={700}>ID</T><Icon w={8} h={16} ml={9} mt={-4}><path d="M4 1v15" stroke="#222" strokeWidth="1.200" /><path d="M4 0l2.600 4H1.400z" fill="#222" /></Icon></Th>
                <Th $pl={5}><Icon w={7} h={13} mt={-1}><path d="M1 0v5h2.500v7.500H7M3.500 8.500H7" stroke="#222" strokeWidth="1.200" /></Icon><T w={59} $ml={8} $weight={700}>SUBJECT</T></Th>
                <Th><T $weight={700}>TYPE</T></Th>
                <Th><T $weight={700}>STATUS</T></Th>
                <Th><T $weight={700}>ASSIGNEE</T></Th>
                <Th><T $weight={700}>START DATE</T></Th>
                <Th><T $weight={700}>FINISH DATE</T></Th>
                <Th><T $weight={700}>SPENT TIME</T></Th>
                <Th><T $weight={700}>PROGRESS (%)</T></Th>
                <Th $pl={16}><Icon w={10}><circle cx="5" cy="5" r="2.600" stroke="#222" strokeWidth="1.800" /><path d="M5 0v2M5 8v2M0 5h2M8 5h2M1.500 1.500l1.300 1.300M7.200 7.200l1.300 1.300M1.500 8.500l1.300-1.300M7.200 2.800l1.300-1.300" stroke="#222" strokeWidth="1.500" /></Icon></Th>
              </Row>
              {ROWS.map(([id, subject, status, start, finish, spent, done], i) => (
                <Row key={id} $h={i ? 40 : 41}>
                  <Td $first={!i} $pl={22} $link><T>{id}</T></Td>
                  <Td $first={!i} $pl={22}><T>{subject}</T></Td>
                  <Td $first={!i} $link><T $weight={700}>TASK</T></Td>
                  <Td $first={!i}><T>{status}</T></Td>
                  <Td $first={!i}><Round $s={28} $bg="#b900be" $mt={2} $pb={3}>AA</Round><T $ml={8}>Anuvrat</T></Td>
                  <Td $first={!i}><T>{start}</T></Td>
                  <Td $first={!i}><T>{finish}</T></Td>
                  <Td $first={!i} $link><T w={20}>{spent}</T><Icon w={14} ml={13}><circle cx="7" cy="7" r="6" stroke="#1f559f" strokeWidth="2" /><path d="M7 4v3l2.500 2" stroke="#1f559f" strokeWidth="1.200" /></Icon></Td>
                  <Td $first={!i}><Bar $v={done} /><T $ml={9} $size={11}>{done + "%"}</T></Td>
                </Row>
              ))}
              <AddRow><Plus s={16} color="#1f559f" /><T w={158} $ml={8}>Create new work package</T></AddRow>
              <Pager><T w={48} $size={13}>(1 - 5/5)</T></Pager>
            </Main>
          </Body>
        </Browser>
      </Desktop>
      <ShareBar>
        <Grip />
        <T $ui w={274} $ml={10} ls={0.2} $up={1}>meet.google.com is sharing your screen.</T>
        <StopButton><T $ui w={87} $up={1} $weight={700}>Stop sharing</T></StopButton>
        <T $ui w={32} $ml={10} $up={1} ls={0.35} $color="#5558ee" $deco="underline">Hide</T>
      </ShareBar>
    </Screen>
  );
}
